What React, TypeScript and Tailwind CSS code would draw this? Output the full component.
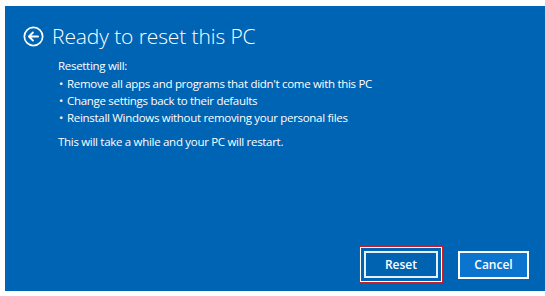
import React from "react";

export default function App() {
  return (
    <div className="w-[545px] h-[296px] bg-white pt-[6px] pl-[5px] pb-[5px]">
      <div
        className="relative flex h-full flex-col bg-[#0064b4] text-white"
        style={{ fontFamily: '"Open Sans", "Noto Sans", sans-serif' }}
      >
        <div className="flex items-center pl-[18px] pt-[15px]">
          <svg width="21" height="21" viewBox="0 0 22 22" className="shrink-0">
            <circle cx="11" cy="11" r="9.6" fill="none" stroke="white" strokeWidth="1.8" />
            <path d="M6.2 11 H15.8 M10.4 6.8 L6.2 11 L10.4 15.2" fill="none" stroke="white" strokeWidth="1.9" strokeLinecap="round" strokeLinejoin="round" />
          </svg>
          <span className="ml-[8px] text-[21px] font-light leading-[30px] tracking-[-0.1px]">Ready to reset this PC</span>
        </div>
        <div className="pl-[53px] pt-[6px] text-[11.5px] leading-[17px] tracking-[-0.3px]">
          <div>Resetting will:</div>
          <ul className="mt-[1px]">
            <li className="flex"><span className="w-[9px] pl-[1px]">•</span>Remove all apps and programs that didn't come with this PC</li>
            <li className="flex"><span className="w-[9px] pl-[1px]">•</span>Change settings back to their defaults</li>
            <li className="flex"><span className="w-[9px] pl-[1px]">•</span>Reinstall Windows without removing your personal files</li>
          </ul>
          <div className="mt-[7px]">This will take a while and your PC will restart.</div>
        </div>
        <div className="mt-auto flex items-center justify-end gap-[15px] pb-[8px] pr-[16px]">
          <div className="border border-[#d01c24]">
            <div className="border border-white p-[3px]">
              <button className="flex h-[27px] w-[74px] items-center justify-center border-2 border-[#e6f0fa] bg-[#0063b1] text-[12px] font-semibold text-white">
                Reset
              </button>
            </div>
          </div>
          <button className="flex h-[28px] w-[71px] items-center justify-center border-2 border-white bg-[#0a74cf] text-[12px] font-semibold text-white">
            Cancel
          </button>
        </div>
      </div>
    </div>
  );
}
